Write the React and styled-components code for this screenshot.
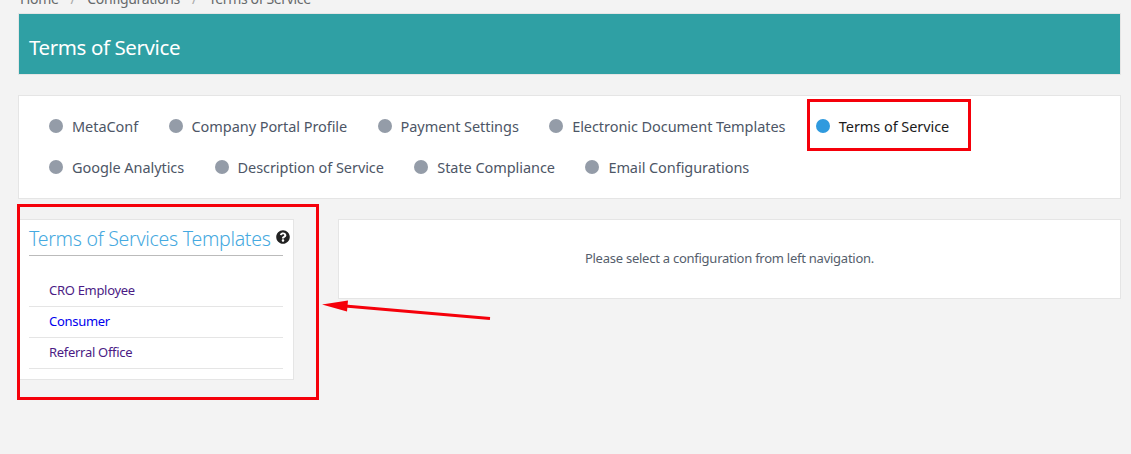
import React from "react";
import styled, { createGlobalStyle } from "styled-components";
import { FaQuestionCircle } from "react-icons/fa";

const Global = createGlobalStyle`
  html, body { margin: 0; padding: 0; background: #f3f3f3; height: 100%; overflow: hidden; }
  body { font-family: "Noto Sans", "Liberation Sans", sans-serif; }
`;

const Page = styled.div`
  position: relative;
  width: 1131px;
  height: 454px;
  overflow: hidden;
  padding: 0 10px 0 18px;
  box-sizing: border-box;
`;

const Crumbs = styled.div`
  display: flex;
  height: 13px;
  box-sizing: border-box;
  align-items: flex-end;
  padding: 0 0 4px 2px;
  font-size: 14px;
  line-height: 20px;
  color: #676a6c;
  letter-spacing: -0.35px;
`;
const Crumb = styled.span`
  white-space: nowrap;
`;
const Sep = styled(Crumb)`
  margin: 0 12px;
  color: #aaa;
`;

const Heading = styled.div`
  height: 62px;
  box-sizing: border-box;
  background: #2fa0a4;
  border: 1px solid #e5e5e5;
  padding: 5px 0 0 10px;
  display: flex;
  align-items: center;
  font-size: 20.5px;
  color: #fff;
  letter-spacing: -0.4px;
`;

const NavPanel = styled.div`
  margin-top: 20px;
  height: 104px;
  box-sizing: border-box;
  background: #fff;
  border: 1px solid #e5e5e5;
  padding: 18px 30px 0;
  display: flex;
  flex-wrap: wrap;
  align-content: flex-start;
  column-gap: 30.4px;
  row-gap: 17px;
`;

const NavItem = styled.div`
  height: 24px;
  display: flex;
  align-items: center;
  gap: 9px;
  font-size: 14.5px;
  letter-spacing: -0.06px;
  white-space: nowrap;
  color: ${(p) => (p.$active ? "#1c1c1c" : "#4d5666")};
`;

const Dot = styled.span`
  width: 14px;
  height: 14px;
  border-radius: 50%;
  flex: none;
  background: ${(p) => (p.$active ? "#2f9ade" : "#949ca8")};
`;

const Columns = styled.div`
  margin-top: 20px;
  display: flex;
  align-items: flex-start;
  gap: 44px;
`;

const Sidebar = styled.div`
  width: 276px;
  height: 161px;
  box-sizing: border-box;
  background: #fff;
  border: 1px solid #e5e5e5;
  padding: 0 10px;
`;

const SideTitle = styled.div`
  height: 36px;
  box-sizing: border-box;
  border-bottom: 1px solid #bbb;
  padding-top: 2px;
  display: flex;
  align-items: center;
  white-space: nowrap;
  font-size: 19.5px;
  font-weight: 300;
  color: #45a9e0;
  letter-spacing: -0.28px;
  svg {
    margin-left: 5px;
    margin-top: -4px;
    flex: none;
    color: #222;
  }
`;

const SideList = styled.div`
  margin-top: 20px;
`;

const SideLink = styled.div`
  height: 31px;
  box-sizing: border-box;
  border-bottom: 1px solid #e5e5e5;
  padding: 0 0 2px 20px;
  display: flex;
  align-items: center;
  font-size: 13px;
  letter-spacing: -0.3px;
  color: ${(p) => (p.$visited ? "#4b1b85" : "#0000ee")};
`;

const Content = styled.div`
  flex: 1;
  height: 80px;
  box-sizing: border-box;
  background: #fff;
  border: 1px solid #e5e5e5;
  display: flex;
  align-items: center;
  justify-content: center;
  padding-bottom: 3px;
  font-size: 13px;
  letter-spacing: -0.25px;
  color: #555e6c;
`;

const Mark = styled.div`
  position: absolute;
  box-sizing: border-box;
  border: 3px solid #f5000a;
  left: ${(p) => p.$x}px;
  top: ${(p) => p.$y}px;
  width: ${(p) => p.$w}px;
  height: ${(p) => p.$h}px;
  pointer-events: none;
`;

const Arrow = styled.svg`
  position: absolute;
  left: 0;
  top: 0;
  pointer-events: none;
`;

const nav = [
  ["MetaConf"],
  ["Company Portal Profile"],
  ["Payment Settings"],
  ["Electronic Document Templates"],
  ["Terms of Service", true],
  ["Google Analytics"],
  ["Description of Service"],
  ["State Compliance"],
  ["Email Configurations"],
];

export default function App() {
  return (
    <Page>
      <Global />
      <Crumbs>
        <Crumb>Home</Crumb>
        <Sep>/</Sep>
        <Crumb>Configurations</Crumb>
        <Sep>/</Sep>
        <Crumb>Terms of Service</Crumb>
      </Crumbs>
      <Heading>Terms of Service</Heading>
      <NavPanel>
        {nav.map(([label, active]) => (
          <NavItem key={label} $active={active}>
            <Dot $active={active} />
            {label}
          </NavItem>
        ))}
      </NavPanel>
      <Columns>
        <Sidebar>
          <SideTitle>
            Terms of Services Templates
            <FaQuestionCircle size={14} />
          </SideTitle>
          <SideList>
            <SideLink $visited>CRO Employee</SideLink>
            <SideLink>Consumer</SideLink>
            <SideLink $visited>Referral Office</SideLink>
          </SideList>
        </Sidebar>
        <Content>Please select a configuration from left navigation.</Content>
      </Columns>
      <Mark $x={807} $y={99} $w={164} $h={52} />
      <Mark $x={17} $y={204} $w={302} $h={196} />
      <Arrow width="1131" height="454" viewBox="0 0 1131 454">
        <line x1="490" y1="318.5" x2="345" y2="306" stroke="#f5000a" strokeWidth="3" />
        <polygon points="322,304.5 348,300.5 347,311.5" fill="#f5000a" />
      </Arrow>
    </Page>
  );
}
